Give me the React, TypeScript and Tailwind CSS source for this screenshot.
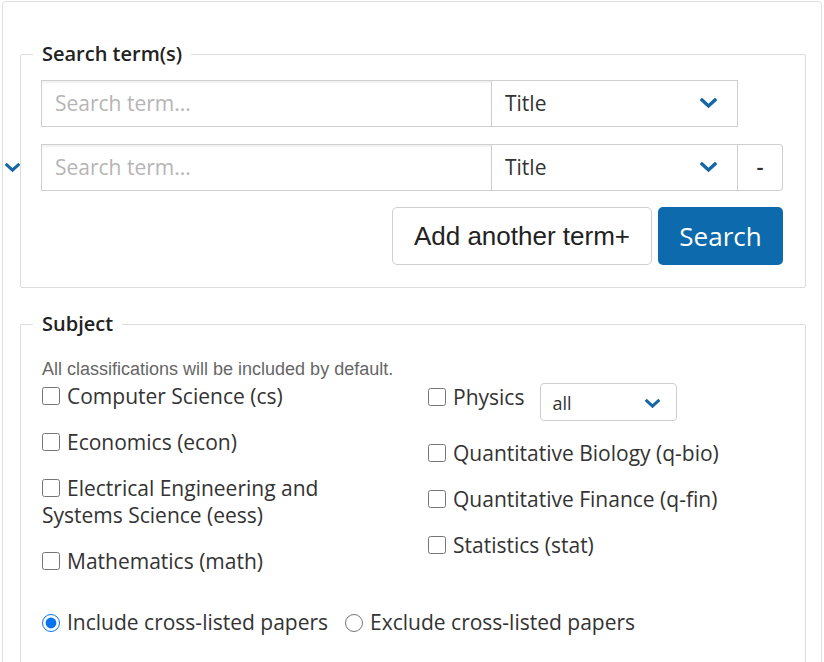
import React from 'react'

function Chevron({ className = '' }: { className?: string }) {
  return (
    <svg viewBox="0 0 17 11" className={className} fill="none">
      <polyline points="2,2 8.5,8 15,2" stroke="#1567a5" strokeWidth="3.4" strokeLinecap="square" />
    </svg>
  )
}

function TermRow({ removable = false }: { removable?: boolean }) {
  return (
    <div className="flex h-[47px]">
      <input
        placeholder="Search term..."
        className="w-[451px] border border-[#cfcfcf] px-[13px] text-[21px] text-[#333] placeholder:text-[#b5b5b5] shadow-[inset_0_2px_2px_rgba(0,0,0,0.06)] outline-none"
      />
      <div className="w-[246px] flex items-center justify-between border-y border-r border-[#cfcfcf] pl-[13px] pr-[20px] text-[21px] text-[#333]">
        <span>Title</span>
        <Chevron className="w-[17px] h-[11px]" />
      </div>
      {removable && (
        <button className="w-[45px] border-y border-r border-[#cfcfcf] rounded-r-[4px] text-[22px] font-semibold text-[#333] pb-[3px]">
          -
        </button>
      )}
    </div>
  )
}

function Check({ children }: { children: React.ReactNode }) {
  return (
    <label className="block text-[21px] leading-[27px] text-[#333]">
      <input type="checkbox" className="w-[18px] h-[18px] m-0 mr-[7px] align-[-1px]" />
      {children}
    </label>
  )
}

export default function App() {
  return (
    <div className="h-[662px] overflow-hidden bg-white" style={{ fontFamily: '"Open Sans", sans-serif' }}>
      <div className="relative mt-[1px] ml-[2px] w-[820px] min-h-[700px] border border-[#dedede] rounded-[4px] pt-[38px] pl-[17px]">
        <Chevron className="absolute left-[2px] top-[161px] w-[15px] h-[10px]" />

        <fieldset className="w-[786px] border border-[#dcdcdc] rounded-[2px] pl-[20px] pr-[22px] pt-[12px] pb-[22px]">
          <legend className="-ml-[8px] px-[9px] text-[20px] leading-[28px] font-semibold text-[#222]">Search term(s)</legend>
          <div className="flex flex-col gap-[17px]">
            <TermRow />
            <TermRow removable />
          </div>
          <div className="flex justify-end gap-[6px] mt-[16px]">
            <button
              className="h-[58px] px-[21px] border border-[#cfcfcf] rounded-[5px] text-[26px] text-[#222]"
              style={{ fontFamily: '"Liberation Sans", Arial, sans-serif' }}
            >
              Add another term+
            </button>
            <button className="h-[58px] w-[125px] rounded-[5px] bg-[#0d6aad] text-[26px] text-white">Search</button>
          </div>
        </fieldset>

        <fieldset className="mt-[22px] w-[786px] border border-[#dcdcdc] rounded-[2px] pl-[20px] pr-[22px] pt-[22px] pb-[30px]">
          <legend className="-ml-[8px] px-[9px] text-[20px] leading-[28px] font-semibold text-[#222]">Subject</legend>
          <p
            className="ml-[1px] text-[18px] leading-[18px] text-[#666]"
            style={{ fontFamily: '"Liberation Sans", Arial, sans-serif' }}
          >
            All classifications will be included by default.
          </p>
          <div className="grid grid-cols-[386px_1fr] mt-[5px] ml-[1px]">
            <div className="flex flex-col gap-[19px] pr-[40px]">
              <Check>Computer Science (cs)</Check>
              <Check>Economics (econ)</Check>
              <Check>Electrical Engineering and Systems Science (eess)</Check>
              <Check>Mathematics (math)</Check>
            </div>
            <div className="flex flex-col gap-[19px]">
              <div className="flex items-start">
                <div className="pt-[1px]">
                  <Check>Physics</Check>
                </div>
                <div className="ml-[16px] w-[137px] h-[38px] border border-[#cfcfcf] rounded-[4px] flex items-center justify-between pl-[11px] pr-[16px] pt-[3px] text-[18px] text-[#333]">
                  <span>all</span>
                  <Chevron className="w-[15px] h-[10px]" />
                </div>
              </div>
              <Check>Quantitative Biology (q-bio)</Check>
              <Check>Quantitative Finance (q-fin)</Check>
              <Check>Statistics (stat)</Check>
            </div>
          </div>
          <div className="flex mt-[34px] ml-[1px] text-[21px] leading-[27px] text-[#333]">
            <label className="mr-[17px]">
              <input type="radio" name="cross" defaultChecked className="w-[18px] h-[18px] m-0 mr-[7px] align-[-2px] accent-[#0a74f0]" />
              Include cross-listed papers
            </label>
            <label>
              <input type="radio" name="cross" className="w-[18px] h-[18px] m-0 mr-[7px] align-[-2px]" />
              Exclude cross-listed papers
            </label>
          </div>
        </fieldset>
      </div>
    </div>
  )
}
